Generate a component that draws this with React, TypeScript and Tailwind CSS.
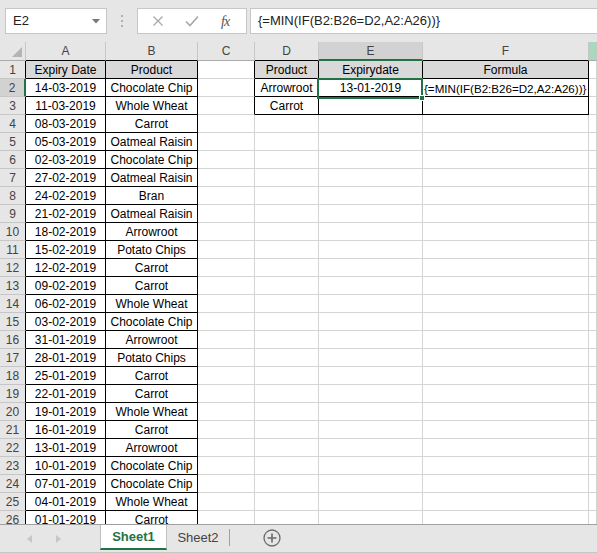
const rows: [string, string][] = [
  ["Expiry Date", "Product"],
  ["14-03-2019", "Chocolate Chip"],
  ["11-03-2019", "Whole Wheat"],
  ["08-03-2019", "Carrot"],
  ["05-03-2019", "Oatmeal Raisin"],
  ["02-03-2019", "Chocolate Chip"],
  ["27-02-2019", "Oatmeal Raisin"],
  ["24-02-2019", "Bran"],
  ["21-02-2019", "Oatmeal Raisin"],
  ["18-02-2019", "Arrowroot"],
  ["15-02-2019", "Potato Chips"],
  ["12-02-2019", "Carrot"],
  ["09-02-2019", "Carrot"],
  ["06-02-2019", "Whole Wheat"],
  ["03-02-2019", "Chocolate Chip"],
  ["31-01-2019", "Arrowroot"],
  ["28-01-2019", "Potato Chips"],
  ["25-01-2019", "Carrot"],
  ["22-01-2019", "Carrot"],
  ["19-01-2019", "Whole Wheat"],
  ["16-01-2019", "Carrot"],
  ["13-01-2019", "Arrowroot"],
  ["10-01-2019", "Chocolate Chip"],
  ["07-01-2019", "Chocolate Chip"],
  ["04-01-2019", "Whole Wheat"],
  ["01-01-2019", "Carrot"],
];

const side: Record<number, [string, string, string]> = {
  1: ["Product", "Expirydate", "Formula"],
  2: ["Arrowroot", "13-01-2019", "{=MIN(IF(B2:B26=D2,A2:A26))}"],
  3: ["Carrot", "", ""],
};

// column widths incl. right border: A..G
const widths = ["w-[80px]", "w-[92px]", "w-[57px]", "w-[64px]", "w-[104px]", "w-[166px]", "flex-1"];
const letters = ["A", "B", "C", "D", "E", "F", ""];

function inTable(r: number, c: number) {
  return (r >= 1 && r <= 26 && c <= 1) || (r >= 1 && r <= 3 && c >= 3 && c <= 5);
}

function ColumnHeaders() {
  return (
    <div className="flex h-[19px] shrink-0">
      <div className="w-[26px] h-full border-r border-b border-r-[#c6c6c6] border-b-[#ababab] bg-[#e6e6e6] relative">
        <svg className="absolute right-[3px] bottom-[3px]" width="10" height="10" viewBox="0 0 10 10">
          <polygon points="10,0 10,10 0,10" fill="#b4b4b4" />
        </svg>
      </div>
      {letters.map((l, c) => {
        const sel = c === 4;
        const green = c === 6;
        const cls = sel
          ? "bg-[#d2d2d2] border-b-2 border-b-[#217346]"
          : green
          ? "bg-[#a9d9bd] border-b border-b-[#ababab]"
          : inTable(1, c)
          ? "bg-[#e6e6e6] border-b border-b-black"
          : "bg-[#e6e6e6] border-b border-b-[#ababab]";
        return (
          <div
            key={c}
            className={`${widths[c]} h-full border-r border-r-[#c6c6c6] ${cls} flex items-center justify-center text-[12px] text-[#444]`}
          >
            {l}
          </div>
        );
      })}
    </div>
  );
}

function Row({ r }: { r: number }) {
  const data = rows[r - 1];
  const s = side[r];
  const cells: string[] = [data[0], data[1], "", s ? s[0] : "", s ? s[1] : "", s ? s[2] : "", ""];
  const rowSel = r === 2;
  return (
    <div className="flex h-[18px] shrink-0">
      <div
        className={
          rowSel
            ? "w-[26px] h-full bg-[#d2d2d2] border-r-2 border-r-[#217346] border-b border-b-[#c6c6c6] flex items-center justify-center text-[12px] text-[#444]"
            : "w-[26px] h-full bg-[#e6e6e6] border-r border-r-black border-b border-b-[#c6c6c6] flex items-center justify-center text-[12px] text-[#444]"
        }
      >
        {r}
      </div>
      {cells.map((t, c) => {
        const tbl = inTable(r, c);
        const leftOfTable = !tbl && inTable(r, c + 1);
        const belowTop = r === 3 && c >= 3 && c <= 5;
        const rCls = tbl || leftOfTable ? "border-r-black" : "border-r-[#d4d4d4]";
        const bCls = tbl || belowTop ? "border-b-black" : "border-b-[#d4d4d4]";
        const head = r === 1 && tbl;
        const left = r === 2 && c === 5;
        return (
          <div
            key={c}
            className={`${widths[c]} h-full border-r border-b ${rCls} ${bCls} ${head ? "bg-[#d9d9d9]" : "bg-white"} flex items-center ${left ? "justify-start pl-[1px] text-[11.6px]" : "justify-center text-[12px]"} text-black whitespace-nowrap overflow-visible leading-[17px] pt-[1px]`}
          >
            {t}
          </div>
        );
      })}
    </div>
  );
}

function FormulaBar() {
  return (
    <div className="h-[42px] shrink-0 bg-[#e6e6e6] flex items-start pt-[8px] pl-[5px]">
      <div className="w-[102px] h-[26px] bg-white border border-[#c6c6c6] flex items-center justify-between pl-[7px] pr-[6px] text-[13px] text-[#222]">
        <span>E2</span>
        <svg width="8" height="5" viewBox="0 0 8 5">
          <polygon points="0,0 8,0 4,4.5" fill="#777" />
        </svg>
      </div>
      <div className="w-[30px] h-[26px] flex flex-col items-center justify-center gap-[3px]">
        <span className="w-[2px] h-[2px] bg-[#b0b0b0]"></span>
        <span className="w-[2px] h-[2px] bg-[#b0b0b0]"></span>
        <span className="w-[2px] h-[2px] bg-[#b0b0b0]"></span>
      </div>
      <div className="w-[110px] h-[26px] bg-white border border-[#c6c6c6] flex items-center">
        <svg className="ml-[14px]" width="12" height="12" viewBox="0 0 12 12">
          <path d="M1.5 1.5 L10.5 10.5 M10.5 1.5 L1.5 10.5" stroke="#a8a8a8" strokeWidth="1.3" />
        </svg>
        <svg className="ml-[21px]" width="14" height="12" viewBox="0 0 14 12">
          <path d="M1 6.5 L5 10.5 L13 1.5" stroke="#a8a8a8" strokeWidth="1.6" fill="none" />
        </svg>
        <span className="ml-[22px] text-[14px] italic text-[#555] font-['Liberation_Serif',serif] tracking-[-1px]">
          fx
        </span>
      </div>
      <div className="ml-[3px] flex-1 h-[26px] bg-white border border-r-0 border-[#c6c6c6] flex items-center pl-[7px] text-[13px] text-[#222]">
        {"{=MIN(IF(B2:B26=D2,A2:A26))}"}
      </div>
    </div>
  );
}

function TabBar() {
  return (
    <div className="h-[29px] shrink-0 bg-[#e6e6e6] border-t border-[#a0a0a0] border-b border-b-[#c6c6c6] flex items-start relative">
      <div className="w-[100px] h-full flex items-center">
        <svg className="ml-[27px]" width="5" height="8" viewBox="0 0 5 8">
          <polygon points="5,0 5,8 0,4" fill="#c6c6c6" />
        </svg>
        <svg className="ml-[24px]" width="5" height="8" viewBox="0 0 5 8">
          <polygon points="0,0 0,8 5,4" fill="#c6c6c6" />
        </svg>
      </div>
      <div className="w-[67px] h-[25px] bg-white border-l border-r border-[#c0c0c0] border-b-2 border-b-[#217346] flex items-center justify-center text-[13px] font-bold text-[#217346]">
        Sheet1
      </div>
      <div className="w-[62px] h-[25px] flex items-center justify-center text-[13px] text-[#444]">Sheet2</div>
      <div className="w-px h-[17px] mt-[4px] bg-[#a0a0a0]"></div>
      <div className="ml-[33px] h-[25px] flex items-center">
        <svg width="18" height="18" viewBox="0 0 18 18">
          <circle cx="9" cy="9" r="8" stroke="#6a6a6a" strokeWidth="1.3" fill="none" />
          <path d="M9 4.5 V13.5 M4.5 9 H13.5" stroke="#6a6a6a" strokeWidth="1.6" />
        </svg>
      </div>
    </div>
  );
}

export default function App() {
  const nums = Array.from({ length: 26 }, (_, i) => i + 1);
  return (
    <div className="w-[597px] h-[553px] overflow-hidden flex flex-col bg-white font-['Liberation_Sans',Arial,sans-serif]">
      <FormulaBar />
      <div className="relative h-[482px] overflow-hidden flex flex-col">
        <ColumnHeaders />
        {nums.map((r) => (
          <Row key={r} r={r} />
        ))}
        {/* active cell E2 */}
        <div className="absolute left-[317px] top-[36px] w-[106px] h-[21px] border-2 border-[#217346] pointer-events-none"></div>
        <div className="absolute left-[419px] top-[53px] w-[6px] h-[6px] bg-[#217346] border border-white"></div>
      </div>
      <TabBar />
    </div>
  );
}
